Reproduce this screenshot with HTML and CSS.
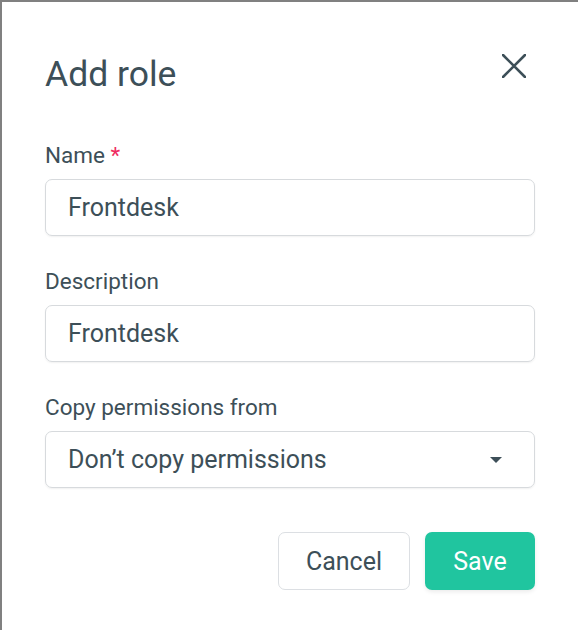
FILE: index.html
```html
<!DOCTYPE html>
<html>
<head>
<meta charset="utf-8">
<link rel="stylesheet" href="styles.css">
</head>
<body>
<div class="dialog">
  <div class="header">
    <h1 class="title">Add role</h1>
    <button class="close" aria-label="Close">
      <svg width="24" height="24" viewBox="0 0 24 24"><path d="M1 1L23 23M23 1L1 23" stroke="#3d4f58" stroke-width="2.6" stroke-linecap="round" fill="none"/></svg>
    </button>
  </div>
  <div class="field">
    <label class="label">Name <span class="req">*</span></label>
    <div class="input">Frontdesk</div>
  </div>
  <div class="field">
    <label class="label">Description</label>
    <div class="input">Frontdesk</div>
  </div>
  <div class="field">
    <label class="label">Copy permissions from</label>
    <div class="input select">
      <span>Don’t copy permissions</span>
      <span class="caret"></span>
    </div>
  </div>
  <div class="actions">
    <button class="btn cancel">Cancel</button>
    <button class="btn save">Save</button>
  </div>
</div>
</body>
</html>
```
FILE: styles.css
```css
html, body {
  margin: 0;
  padding: 0;
  height: 100%;
}
body {
  background: #808080;
  font-family: Roboto, "Liberation Sans", sans-serif;
  color: #3d4f58;
  padding: 2px 0 0 2px;
  box-sizing: border-box;
}
.dialog {
  background: #fff;
  height: 100%;
  box-sizing: border-box;
  padding: 52px 43px 0 43px;
}
.header {
  display: flex;
  justify-content: space-between;
  align-items: flex-start;
  height: 40px;
  margin-bottom: 49px;
}
.title {
  margin: 0;
  font-size: 35.5px;
  line-height: 40px;
  font-weight: 400;
  color: #3d4f58;
}
.close {
  background: none;
  border: 0;
  padding: 0;
  margin: 0 9px 0 0;
  width: 24px;
  height: 24px;
  display: flex;
}
.field {
  display: flex;
  flex-direction: column;
  margin-bottom: 33px;
}
.label {
  font-size: 22.5px;
  line-height: 24px;
  margin-bottom: 12px;
}
.req {
  color: #ef2b61;
}
.input {
  height: 57px;
  box-sizing: border-box;
  border: 1px solid #d7dadd;
  border-radius: 7px;
  box-shadow: 0 1px 2px rgba(0,0,0,0.06);
  padding: 0 22px;
  display: flex;
  align-items: center;
  font-size: 25px;
  color: #3d4f58;
}
.select {
  justify-content: space-between;
  padding-right: 32px;
}
.caret {
  width: 0;
  height: 0;
  border-left: 6px solid transparent;
  border-right: 6px solid transparent;
  border-top: 6px solid #3d4f58;
}
.actions {
  display: flex;
  justify-content: flex-end;
  gap: 15px;
  margin-top: 44px;
}
.btn {
  height: 58px;
  border-radius: 7px;
  font-family: Roboto, "Liberation Sans", sans-serif;
  font-size: 25px;
  padding: 0;
}
.cancel {
  width: 132px;
  background: #fff;
  border: 1px solid #dcdfe3;
  color: #3d4f58;
}
.save {
  width: 110px;
  background: #20c59f;
  border: 0;
  color: #fff;
  box-shadow: 0 2px 4px rgba(0,0,0,0.08);
}
```
